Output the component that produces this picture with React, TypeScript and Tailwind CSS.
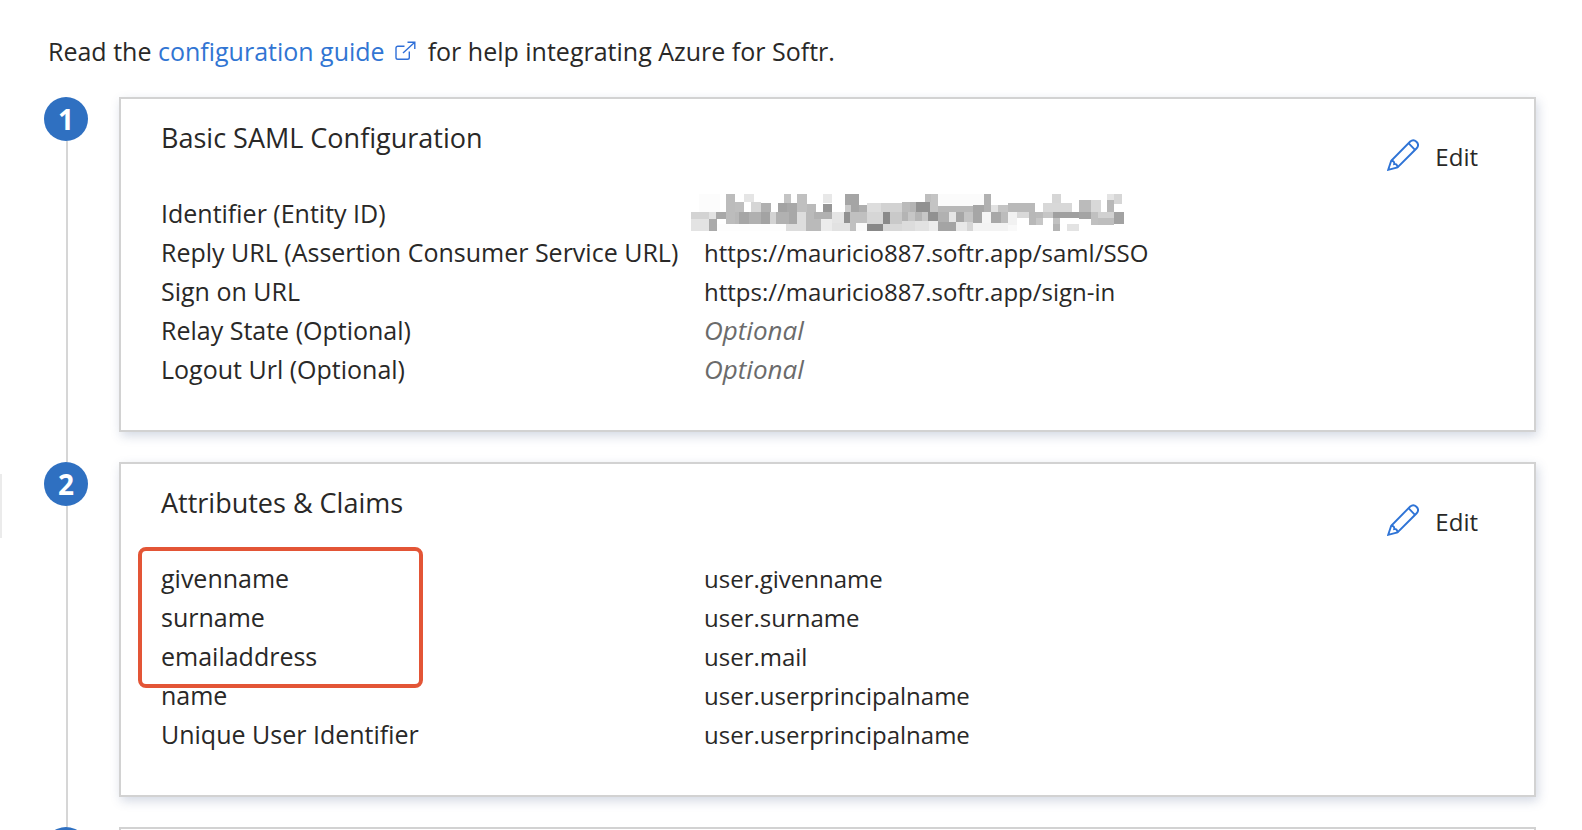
import type { ReactNode } from "react";

type Row = { label: string; value: ReactNode };

// x, y, width, height, grey level
const mosaic: [number, number, number, number, number][] = [
  [57, 39, 63, 54, 252], [138, 39, 27, 90, 188], [165, 63, 27, 30, 190], [192, 39, 30, 24, 229],
  [213, 63, 30, 30, 214], [243, 66, 30, 27, 176], [312, 39, 21, 27, 196], [294, 66, 27, 27, 163],
  [321, 66, 30, 63, 168], [351, 39, 30, 54, 192], [381, 69, 27, 24, 186], [429, 39, 27, 27, 232],
  [429, 69, 27, 24, 150], [495, 39, 42, 33, 165], [495, 72, 18, 21, 202], [513, 72, 24, 21, 165],
  [537, 72, 24, 21, 174], [561, 66, 42, 27, 221], [603, 66, 63, 27, 210], [666, 63, 42, 30, 186],
  [33, 93, 54, 21, 211], [87, 93, 21, 21, 226], [108, 93, 30, 21, 168], [33, 114, 54, 36, 227],
  [87, 114, 24, 36, 170], [111, 129, 207, 21, 253], [165, 93, 12, 36, 184], [177, 93, 30, 36, 166], [207, 93, 36, 36, 176],
  [243, 93, 27, 36, 163], [270, 93, 18, 36, 211], [288, 93, 39, 36, 177], [318, 129, 60, 21, 221],
  [351, 93, 27, 57, 221], [378, 93, 45, 57, 186], [402, 93, 54, 21, 177], [423, 114, 33, 36, 236],
  [456, 93, 36, 33, 229], [456, 126, 54, 24, 226], [492, 93, 18, 33, 145], [510, 93, 51, 33, 192],
  [510, 126, 18, 24, 192], [528, 126, 33, 24, 250], [561, 93, 48, 36, 214], [561, 129, 48, 21, 136],
  [609, 93, 21, 36, 138], [630, 93, 36, 36, 201], [609, 129, 57, 21, 216], [666, 93, 18, 27, 180],
  [684, 93, 21, 27, 198], [705, 93, 21, 27, 181], [726, 93, 18, 27, 199], [666, 120, 39, 30, 220],
  [690, 63, 18, 30, 180], [735, 39, 39, 54, 196], [735, 39, 18, 24, 190], [708, 63, 42, 30, 145],
  [705, 120, 42, 30, 226], [747, 120, 27, 30, 236], [744, 93, 30, 27, 145],
  [774, 39, 138, 36, 251], [774, 75, 105, 18, 184], [879, 72, 54, 21, 166], [912, 39, 21, 54, 177],
  [774, 93, 33, 30, 177], [807, 93, 21, 30, 230], [828, 93, 24, 30, 166], [852, 93, 27, 30, 196],
  [879, 93, 27, 33, 166], [774, 123, 54, 27, 164], [828, 123, 33, 27, 232], [861, 123, 18, 27, 214],
  [879, 126, 105, 24, 243], [906, 93, 27, 33, 245], [933, 72, 21, 21, 226], [954, 72, 30, 21, 196],
  [984, 66, 81, 27, 185], [933, 93, 30, 33, 168], [963, 93, 21, 33, 188], [984, 93, 27, 39, 242],
  [984, 132, 27, 18, 249], [1011, 93, 36, 18, 217], [1047, 93, 21, 39, 184], [1068, 93, 21, 18, 186],
  [1068, 111, 21, 21, 198], [1089, 93, 30, 18, 198], [1089, 66, 87, 27, 216], [1116, 39, 27, 27, 214],
  [1119, 93, 78, 18, 160], [1119, 111, 21, 18, 193], [1119, 129, 21, 21, 180], [1161, 129, 36, 21, 227],
  [1197, 57, 36, 36, 187], [1233, 57, 30, 36, 216], [1197, 93, 36, 21, 164], [1233, 93, 21, 39, 192],
  [1254, 93, 48, 18, 209], [1254, 111, 48, 21, 190], [1281, 39, 21, 18, 228], [1302, 39, 24, 30, 214],
  [1281, 57, 21, 36, 184], [1302, 93, 30, 36, 162],
];

function RedactedValue() {
  return (
    <svg className="-ml-[13px] block h-[37px] w-[433px]" viewBox="33 39 1299 111" shapeRendering="crispEdges" role="img" aria-label="Hidden identifier">
      {mosaic.map(([x, y, w, h, grey], i) => (
        <rect key={i} x={x} y={y} width={w} height={h} fill={`rgb(${grey},${grey},${grey})`} />
      ))}
    </svg>
  );
}

function ExternalIcon() {
  return (
    <svg className="mr-3 ml-2.5 inline-block h-5 w-[21px] align-baseline" viewBox="0 0 21 20" fill="none" stroke="#2f6fd8" strokeWidth="1.4" aria-hidden="true">
      <path d="M9.500 5.200H2.800A1.800 1.800 0 0 0 1 7V16.500A1.800 1.800 0 0 0 2.800 18.300H12.500A1.800 1.800 0 0 0 14.300 16.500V10.500" />
      <path d="M12.500 1.200H19.800V8M19.500 1.500L8 12" />
    </svg>
  );
}

function PencilIcon() {
  return (
    <svg className="h-8 w-8" viewBox="0 0 32 32" fill="none" stroke="#2f74d6" strokeWidth="1.9" aria-hidden="true">
      <path d="M1.200 30.800L4.200 21.800L23.200 2.500A4.700 4.700 0 0 1 29.900 9L10.500 28.500Z" />
      <path d="M21.500 4.200L28 10.800M4.200 21.800C6.500 21.800 7.500 23 7.200 25C9 24.600 10.500 26 10.500 28.500" />
    </svg>
  );
}

function Step({ number, title, rows, highlight }: { number: number; title: string; rows: Row[]; highlight?: boolean }) {
  return (
    <li className="flex gap-[31px]">
      <div className="flex w-11 shrink-0 flex-col">
        <span className="flex size-11 items-center justify-center rounded-full bg-[#2f70c1] text-[28px] leading-none font-bold text-white">{number}</span>
        <span className="ml-[22px] w-0.5 flex-1 bg-[#d6d6d6]" />
      </div>
      <section className="mb-[30px] min-h-[335px] flex-1 border-2 border-[#d2d2d2] bg-white pt-5 pr-14 pl-10 shadow-[2px_4px_10px_rgba(60,80,130,0.22)]">
        <div className="flex h-[75px] items-start justify-between">
          <h2 className="text-[27px] leading-[38px]">{title}</h2>
          <button type="button" className="mt-5 flex items-start gap-4 text-[24px] leading-9"><PencilIcon />Edit</button>
        </div>
        <dl className="relative text-[24px] leading-[39px]">
          {rows.map((row) => (
            <div key={row.label} className="flex h-[39px]">
              <dt className="w-[543px] shrink-0 text-[25px] whitespace-nowrap">{row.label}</dt>
              <dd>{row.value}</dd>
            </div>
          ))}
          {highlight && <div className="pointer-events-none absolute -top-3 -left-[23px] h-[141px] w-[285px] rounded-lg border-4 border-[#e35536]" />}
        </dl>
      </section>
    </li>
  );
}

const optional = <em className="text-[26px] text-[#6b6b6b]">Optional</em>;

const samlRows: Row[] = [
  { label: "Identifier (Entity ID)", value: <RedactedValue /> },
  { label: "Reply URL (Assertion Consumer Service URL)", value: "https://mauricio887.softr.app/saml/SSO" },
  { label: "Sign on URL", value: "https://mauricio887.softr.app/sign-in" },
  { label: "Relay State (Optional)", value: optional },
  { label: "Logout Url (Optional)", value: optional },
];

const claimRows: Row[] = [
  { label: "givenname", value: "user.givenname" },
  { label: "surname", value: "user.surname" },
  { label: "emailaddress", value: "user.mail" },
  { label: "name", value: "user.userprincipalname" },
  { label: "Unique User Identifier", value: "user.userprincipalname" },
];

export default function App() {
  return (
    <main className="relative h-screen overflow-hidden bg-white pt-[31px] pr-[46px] pl-11 font-['Open_Sans','Noto_Sans',sans-serif] text-[#292827]">
      <div className="absolute top-[474px] left-0 h-16 w-0.5 bg-[#ebebeb]" />
      <p className="mb-[26px] pl-1 text-[25px] leading-10">
        Read the <a href="#guide" className="text-[#3175d3]">configuration guide<ExternalIcon /></a>for help integrating Azure for Softr.
      </p>
      <ol>
        <Step number={1} title="Basic SAML Configuration" rows={samlRows} />
        <Step number={2} title="Attributes & Claims" rows={claimRows} highlight />
        <li className="flex gap-[31px]">
          <span className="size-11 shrink-0 rounded-full bg-[#2f70c1]" />
          <section className="h-20 flex-1 border-2 border-[#d2d2d2] bg-white" />
        </li>
      </ol>
    </main>
  );
}
